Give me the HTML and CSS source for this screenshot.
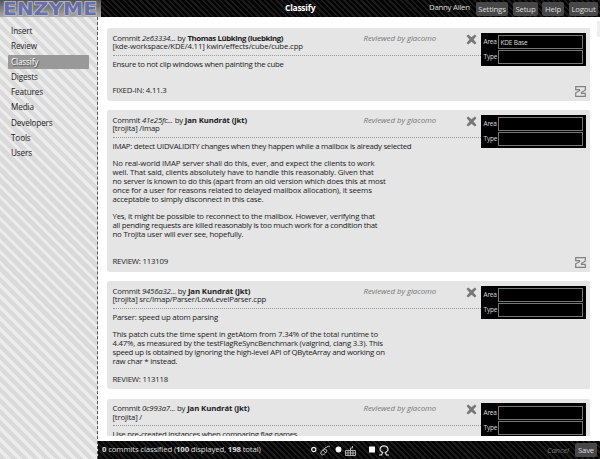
FILE: index.html
```html
<!DOCTYPE html>
<html lang="en">
<head>
<meta charset="utf-8">
<title>Enzyme - Classify</title>
<link rel="stylesheet" href="styles.css">
</head>
<body>
<svg class="defs" width="0" height="0">
  <symbol id="cross" viewBox="0 0 11 11"><path d="M.5 2 2.2.4 5.5 3.3 8.8.4l1.7 1.6-3 3.5 3 3.4-1.7 1.7-3.3-2.9-3.3 2.9L.5 8.9l3-3.4z" fill="#777"/></symbol>
  <symbol id="diff" viewBox="0 0 11 11"><path d="M.7.7h9.600v3.500L6.500 6.300v1h3.800v3H.7V6.800l3.800-2.100v-1H.7z" fill="none" stroke="#808080" stroke-width="1.200"/></symbol>
</svg>
<header class="top">
  <svg class="logo" width="101" height="17" viewBox="0 0 101 17"><text class="logo-text" x="3" y="14.500" textLength="94" lengthAdjust="spacingAndGlyphs">ENZYME</text></svg>
  <h1 class="title">Classify</h1>
  <span class="user">Danny Allen</span>
  <a class="btn settings">Settings</a><a class="btn setup">Setup</a><a class="btn help">Help</a><a class="btn logout">Logout</a>
</header>
<div class="middle">
  <nav class="side">
    <a>Insert</a><a>Review</a><a class="active">Classify</a><a>Digests</a><a>Features</a><a>Media</a><a>Developers</a><a>Tools</a><a>Users</a>
  </nav>
  <div class="content">
  <div class="scroll">
  <main class="list">
    <article class="card first">
      <div class="head">
        <div class="info"><div>Commit <i>2e63334...</i> by <b class="long">Thomas Lübking (luebking)</b></div><div class="path">[kde-workspace/KDE/4.11] kwin/effects/cube/cube.cpp</div></div>
        <i class="reviewed">Reviewed by giacomo</i>
        <svg class="cross"><use href="#cross"/></svg>
      </div>
      <div class="fields"><label>Area<span class="input">KDE Base</span></label><label>Type<span class="input"></span></label></div>
      <pre class="msg"><span class="subject">Ensure to not clip windows when painting the cube</span>


FIXED-IN: 4.11.3</pre>
      <svg class="diff"><use href="#diff"/></svg>
    </article>
    <article class="card second">
      <div class="head">
        <div class="info"><div>Commit <i>41e25fc...</i> by <b>Jan Kundrát (jkt)</b></div><div>[trojita] /Imap</div></div>
        <i class="reviewed">Reviewed by giacomo</i>
        <svg class="cross"><use href="#cross"/></svg>
      </div>
      <div class="fields"><label>Area<span class="input"></span></label><label>Type<span class="input"></span></label></div>
      <pre class="msg"><span class="subject">IMAP: detect UIDVALIDITY changes when they happen while a mailbox is already selected</span>

<span class="wide">No real-world IMAP server shall do this, ever, and expect the clients to work
well. That said, clients absolutely have to handle this reasonably. Given that</span>
no server is known to do this (apart from an old version which does this at most
<span class="wide">once for a user for reasons related to delayed mailbox allocation), it seems</span>
acceptable to simply disconnect in this case.

Yes, it might be possible to reconnect to the mailbox. However, verifying that
<span class="subject">all pending requests are killed reasonably is too much work for a condition that</span>
no Trojita user will ever see, hopefully.


REVIEW: 113109</pre>
      <svg class="diff"><use href="#diff"/></svg>
    </article>
    <article class="card third">
      <div class="head">
        <div class="info"><div>Commit <i>9456a32...</i> by <b>Jan Kundrát (jkt)</b></div><div>[trojita] src/Imap/Parser/LowLevelParser.cpp</div></div>
        <i class="reviewed">Reviewed by giacomo</i>
        <svg class="cross"><use href="#cross"/></svg>
      </div>
      <div class="fields"><label>Area<span class="input"></span></label><label>Type<span class="input"></span></label></div>
      <pre class="msg">Parser: speed up atom parsing

<span class="wide">This patch cuts the time spent in getAtom from 7.34% of the total runtime to</span>
4.47%, as measured by the testFlagReSyncBenchmark (valgrind, clang 3.3). This
<span class="subject">speed up is obtained by ignoring the high-level API of QByteArray and working on</span>
raw char * instead.

REVIEW: 113118</pre>
    </article>
    <article class="card fourth">
      <div class="head">
        <div class="info"><div>Commit <i>0c993a7...</i> by <b>Jan Kundrát (jkt)</b></div><div>[trojita] /</div></div>
        <i class="reviewed">Reviewed by giacomo</i>
        <svg class="cross"><use href="#cross"/></svg>
      </div>
      <div class="fields"><label>Area<span class="input"></span></label><label>Type<span class="input"></span></label></div>
      <pre class="msg subject">Use pre-created instances when comparing flag names</pre>
    </article>
  </main>
  <div class="track"><div class="thumb"></div></div>
  </div>
  <footer class="bottom">
    <span class="status"><b>0</b> commits classified (<b>100</b> displayed, <b>198</b> total)</span>
    <svg class="modes" width="82" height="15" viewBox="0 0 82 15">
      <circle cx="3.800" cy="5.500" r="2.100" fill="#111" stroke="#eee" stroke-width="1.200"/>
      <g fill="none" stroke="#ddd" stroke-width=".9"><path d="M12 6.500c2-2 3.500-1.600 4.600-.6 1 1.200-2.600 5.500-4.900 4.900-1.400-.5-1-2.700.3-4.300zM13 6l2.700 3M14.500 5.300C15 2.500 16 4 17 3s2-1 3-.5"/></g>
      <circle cx="28.500" cy="5.500" r="2.900" fill="#fff"/>
      <path d="M35.500 6.500h10v5h-10zM35.500 9h10M38 6.500v5M40.500 6.500v5M43 6.500v5M40.500 6.500V4h2V2" fill="none" stroke="#bbb" stroke-width=".9"/>
      <path d="M59 2.500h6v6h-6z" fill="#fff"/>
      <path d="M69 11h2.500l1.200-2.400C67.800 6 70.500 1.800 74 1.800S80.200 6 75.300 8.600L76.500 11h2.500" fill="none" stroke="#ddd" stroke-width="1.200"/>
    </svg>
    <span class="cancel">Cancel</span><a class="btn save">Save</a>
  </footer>
  </div>
</div>
</body>
</html>
```
FILE: styles.css
```css
* { box-sizing: border-box; }
body {
  margin: 0;
  width: 600px;
  height: 459px;
  overflow: hidden;
  display: flex;
  flex-direction: column;
  background: #fff;
  color: #1c1c1c;
  font: 7.8px/8.86px "Open Sans", sans-serif;
  letter-spacing: -0.200px;
}
.defs { position: absolute; }
.top, .bottom {
  flex: none;
  display: flex;
  background: repeating-linear-gradient(45deg, #040404 0 2.300px, #1b1b1b 2.300px 4px);
  color: #ddd;
}
.top { height: 17px; align-items: center; }
.logo { flex: none; background: linear-gradient(#555, #aaa); }
.logo-text {
  font: bold 17px "DejaVu Sans", sans-serif;
  letter-spacing: 0;
  fill: #6870aa;
  stroke: #c0c0c8;
  stroke-width: 1.500px;
  paint-order: stroke;
}
.title { margin: 0 0 0 184px; width: 144px; font-size: 8.500px; color: #fff; letter-spacing: -0.250px; }
.user { width: 47px; white-space: nowrap; margin-top: -2px; letter-spacing: -0.250px; }
.btn {
  height: 14px;
  border-radius: 2px;
  background: #474747;
  color: #ddd;
  text-align: center;
  line-height: 14px;
}
.settings { width: 32px; }
.setup { width: 25px; margin-left: 5px; }
.help { width: 22px; margin-left: 4px; }
.logout { width: 29px; margin-left: 5px; }
.middle { flex: 1; min-height: 0; display: flex; }
.side {
  width: 98px;
  flex: none;
  padding: 7px 8px 0;
  border-right: 1px dashed #555;
  background: repeating-linear-gradient(45deg, #dadada 0 4.600px, #ececec 4.600px 7.800px);
  display: flex;
  flex-direction: column;
  gap: 1.300px;
}
.side a {
  height: 14px;
  width: 81px;
  padding-left: 3px;
  line-height: 14px;
  font-size: 8.200px;
  letter-spacing: -0.150px;
}
.side .active { background: #999; color: #fff; border-radius: 1px; text-shadow: 1px 1px 1px #444; }
.content { flex: 1; min-width: 0; display: flex; flex-direction: column; justify-content: space-between; }
.scroll { display: flex; }
.list {
  width: 492px;
  height: 419px;
  overflow: hidden;
  padding: 11px 0 0 9px;
}
.card {
  width: 483.500px;
  position: relative;
  padding: 5.500px;
  border-radius: 3px;
  background: #e5e5e5;
  margin-bottom: 9.500px;
}
.first { height: 72.500px; }
.second { height: 161.500px; }
.third { height: 108px; }
.fourth { height: 110px; }
.head {
  display: flex;
  height: 22px;
  width: 368px;
  border-bottom: 1px dotted #999;
}
.info { width: 251px; flex: none; white-space: nowrap; }
.info b { letter-spacing: -0.120px; }
.info .long { letter-spacing: -0.380px; }
.path { letter-spacing: -0.150px; }
.reviewed { width: 102px; color: #777; white-space: nowrap; letter-spacing: -0.040px; }
.cross { width: 11px; height: 11px; flex: none; }
.fields {
  position: absolute;
  right: 5px;
  top: 4.500px;
  width: 105px;
  height: 33.500px;
  padding: 2.500px 3px 0;
  background: #000;
  color: #ddd;
  font-size: 6.500px;
}
.fields label { display: flex; height: 14px; line-height: 16px; align-items: center; justify-content: space-between; margin-bottom: 1px; }
.input { width: 85px; height: 14px; border: 1px solid #777; padding-left: 2px; line-height: 13px; }
.msg { margin: 4px 0 0; font: inherit; }
.msg.subject, .subject { letter-spacing: -0.280px; }
.wide { letter-spacing: -0.150px; }
.diff { position: absolute; right: 5px; bottom: 3.500px; width: 11px; height: 11px; }
.track { flex: none; width: 10px; padding: 4px 0 0 7px; }
.thumb { height: 16px; background: #eee; }
.bottom { height: 18px; }
.status { flex: none; width: 211px; padding: 4px 0 0 4px; white-space: nowrap; letter-spacing: -0.150px; }
.modes { margin: 3px 0 0 1px; flex: none; }
.cancel { width: 28px; margin: 5px 0 0 155px; color: #777; font-style: italic; }
.save { width: 22px; margin-top: 2px; }
```
